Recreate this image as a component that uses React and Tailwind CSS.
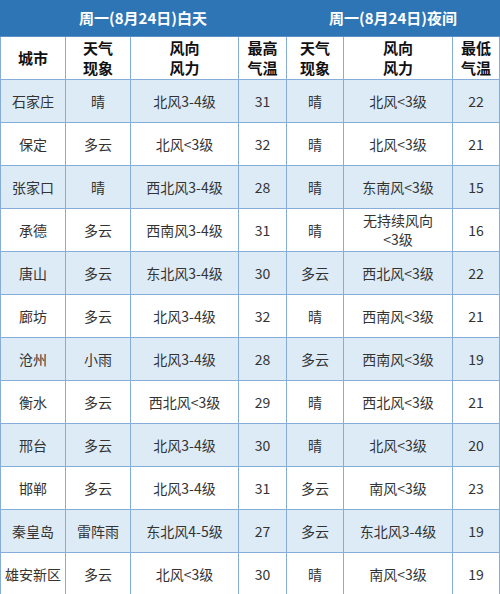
import React from "react";

const rows = [
  ["石家庄", "晴", "北风3-4级", "31", "晴", "北风<3级", "22"],
  ["保定", "多云", "北风<3级", "32", "晴", "北风<3级", "21"],
  ["张家口", "晴", "西北风3-4级", "28", "晴", "东南风<3级", "15"],
  ["承德", "多云", "西南风3-4级", "31", "晴", "无持续风向\n<3级", "16"],
  ["唐山", "多云", "东北风3-4级", "30", "多云", "西北风<3级", "22"],
  ["廊坊", "多云", "北风3-4级", "32", "晴", "西南风<3级", "21"],
  ["沧州", "小雨", "北风3-4级", "28", "多云", "西南风<3级", "19"],
  ["衡水", "多云", "西北风<3级", "29", "晴", "西北风<3级", "21"],
  ["邢台", "多云", "北风3-4级", "30", "晴", "北风<3级", "20"],
  ["邯郸", "多云", "北风3-4级", "31", "多云", "南风<3级", "23"],
  ["秦皇岛", "雷阵雨", "东北风4-5级", "27", "多云", "东北风3-4级", "19"],
  ["雄安新区", "多云", "北风<3级", "30", "晴", "南风<3级", "19"],
];

const heads = [
  "城市",
  "天气\n现象",
  "风向\n风力",
  "最高\n气温",
  "天气\n现象",
  "风向\n风力",
  "最低\n气温",
];

export default function App() {
  return (
    <div
      className="w-[500px] h-[594px] overflow-hidden bg-white"
      style={{ fontFamily: '"Noto Sans CJK SC", "Noto Sans", sans-serif' }}
    >
      <div className="flex h-[37px] bg-[#2e75b6] border-b border-[#5b8fc6] text-white font-bold text-[15px]">
        <div className="w-[286px] flex items-center justify-center">周一(8月24日)白天</div>
        <div className="flex-1 flex items-center justify-center">周一(8月24日)夜间</div>
      </div>
      <div className="grid grid-cols-[64px_64px_107px_47px_56px_108px_46px] gap-px bg-[#86acd8] px-px pb-px">
        {heads.map((h, i) => (
          <div
            key={"h" + i}
            className="h-[42px] bg-white flex items-center justify-center text-center font-bold text-[15px] leading-[20px] text-[#111] whitespace-pre-line"
          >
            {h}
          </div>
        ))}
        {rows.map((r, ri) =>
          r.map((c, ci) => (
            <div
              key={ri + "-" + ci}
              className={
                "h-[42px] flex items-center justify-center text-center text-[14px] leading-[19px] text-[#333] whitespace-pre-line " +
                (ri % 2 === 0 ? "bg-[#ddebf7]" : "bg-white")
              }
            >
              {c}
            </div>
          ))
        )}
      </div>
    </div>
  );
}
